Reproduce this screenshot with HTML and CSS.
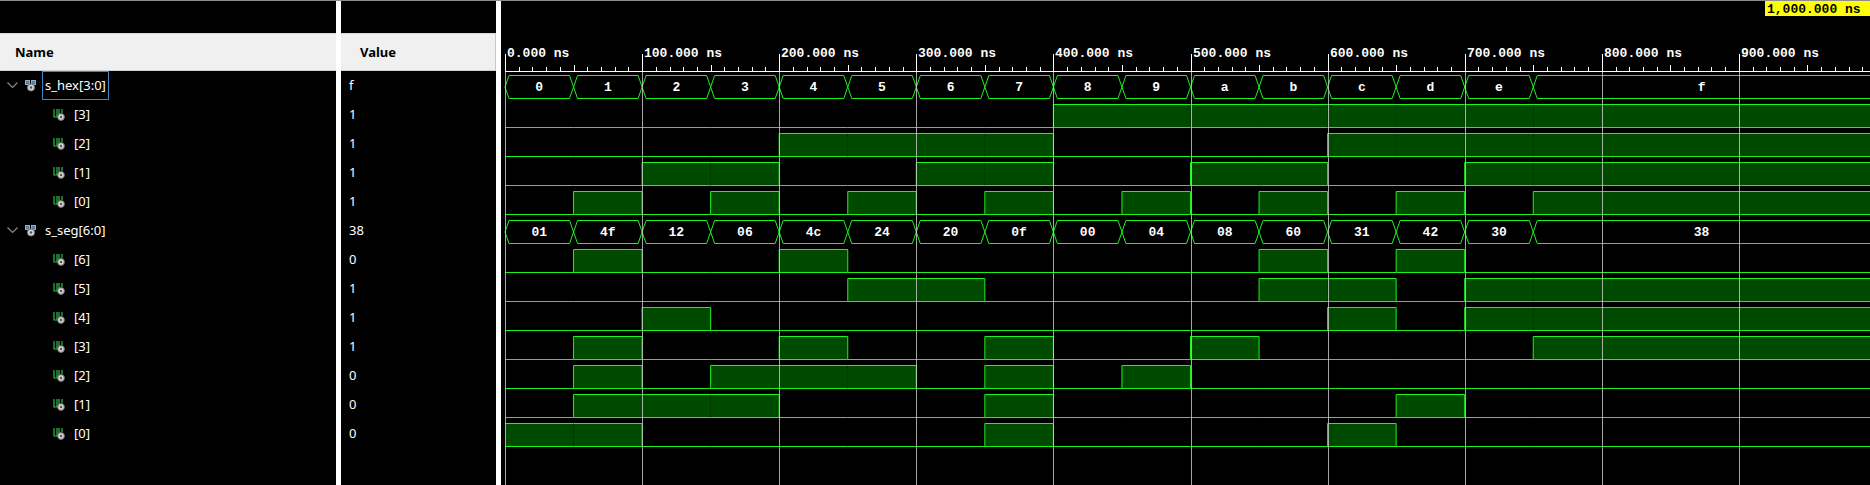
FILE: index.html
```html
<!DOCTYPE html>
<html lang="en">
<head>
  <meta charset="UTF-8">
  <title>Waveform</title>
  <link rel="stylesheet" href="styles.css">
</head>
<body>
  <div class="topline"></div>
  <div class="app">
    <div class="names">
      <div class="blank"></div>
      <div class="head">Name</div>
      <div id="nameRows"></div>
    </div>
    <div class="split"></div>
    <div class="values">
      <div class="blank"></div>
      <div class="head value-head">Value</div>
      <div id="valueRows"></div>
    </div>
    <div class="split"></div>
    <div class="wave">
      <svg id="wave" width="1369" height="484"></svg>
    </div>
  </div>

  <script>
    const hex = [0,1,2,3,4,5,6,7,8,9,10,11,12,13,14,15];
    const seg = [0x01,0x4f,0x12,0x06,0x4c,0x24,0x20,0x0f,0x00,0x04,0x08,0x60,0x31,0x42,0x30,0x38];

    const rows = [];
    rows.push({ type: "bus", name: "s_hex[3:0]", vals: hex, fmt: v => v.toString(16), sel: true });
    for (let b = 3; b >= 0; b--) rows.push({ type: "bit", name: `[${b}]`, vals: hex.map(v => (v >> b) & 1) });
    rows.push({ type: "bus", name: "s_seg[6:0]", vals: seg, fmt: v => v.toString(16).padStart(2, "0") });
    for (let b = 6; b >= 0; b--) rows.push({ type: "bit", name: `[${b}]`, vals: seg.map(v => (v >> b) & 1) });

    const chevron = '<svg class="chev" width="11" height="7" viewBox="0 0 11 7"><polyline points="0.5,0.5 5.5,5.5 10.5,0.5" fill="none" stroke="#8a8a8a" stroke-width="1.2"/></svg>';
    const busIcon = '<svg class="icon" width="13" height="13" viewBox="0 0 13 13"><path d="M0 1h5v5H0zM6 1h5v5H6z" fill="#8fb1cf"/><path d="M1 2h3v3H1zM7 2h3v3H7z" fill="#5d7f9e"/><circle cx="6" cy="8.5" r="3.6" fill="#d6d6d6" stroke="#6a6a6a"/><circle cx="6" cy="8.5" r="1.3" fill="#555"/></svg>';
    const bitIcon = '<svg class="icon" width="13" height="13" viewBox="0 0 13 13"><path d="M1 1v8h3V1M6 1v6M9 1v4" fill="none" stroke="#2fb84a" stroke-width="1.2"/><circle cx="8" cy="9" r="3.4" fill="#d6d6d6" stroke="#6a6a6a"/><circle cx="8" cy="9" r="1.2" fill="#555"/></svg>';

    let nameHtml = "", valueHtml = "";
    rows.forEach(r => {
      const last = r.vals[r.vals.length - 1];
      const shown = r.type === "bus" ? r.fmt(last) : String(last);
      if (r.type === "bus") {
        nameHtml += `<div class="row bus">${chevron}${busIcon}<span class="label${r.sel ? " sel" : ""}">${r.name}</span></div>`;
      } else {
        nameHtml += `<div class="row bit">${bitIcon}<span class="label">${r.name}</span></div>`;
      }
      valueHtml += `<div class="row"><span class="val${r.sel ? " sel" : ""}">${shown}</span></div>`;
    });
    document.getElementById("nameRows").innerHTML = nameHtml;
    document.getElementById("valueRows").innerHTML = valueHtml;

    // waveform
    const W = 1369;
    const X = t => 4 + t * 1.371;
    const rowTop = i => 70 + 29 * i;
    let s = "";

    // timeline ticks
    s += `<line class="axis" x1="${X(0)}" y1="70.5" x2="${W}" y2="70.5"/>`;
    for (let t = 0; t <= 1000; t += 10) {
      const x = Math.round(X(t)) + 0.5;
      if (t % 100 === 0) continue;
      const h = t % 50 === 0 ? 6 : 4;
      s += `<line class="axis" x1="${x}" y1="${70 - h}" x2="${x}" y2="70"/>`;
    }
    let grid = "";
    for (let t = 0; t <= 900; t += 100) {
      const x = Math.round(X(t)) + 0.5;
      s += `<line class="axis" x1="${x}" y1="53" x2="${x}" y2="70"/>`;
      grid += `<line class="grid" x1="${x}" y1="71" x2="${x}" y2="484"/>`;
      s += `<text class="ts" x="${x + 1.5}" y="56">${t}.000 ns</text>`;
    }

    rows.forEach((r, i) => {
      const y0 = rowTop(i);
      const hi = y0 + 4.5, lo = y0 + 27.5, mid = (hi + lo) / 2;
      const edges = r.vals.map((v, k) => X(k * 50));
      edges.push(W + 10);
      if (r.type === "bus") {
        let p = "";
        r.vals.forEach((v, k) => {
          const a = edges[k], b = edges[k + 1];
          if (k === 0) p += `M${a} ${mid}L${a + 4} ${hi}M${a} ${mid}L${a + 4} ${lo}`;
          p += `M${a + 4} ${hi}H${b - 4}M${a + 4} ${lo}H${b - 4}`;
          if (k < r.vals.length - 1) p += `M${b - 4} ${hi}L${b + 4} ${lo}M${b - 4} ${lo}L${b + 4} ${hi}`;
          const cx = (a + Math.min(b, W)) / 2;
          s += `<text class="bv" x="${cx}" y="${mid + 4}">${r.fmt(v)}</text>`;
        });
        s += `<path class="sig" d="${p}"/>`;
      } else {
        let p = `M${edges[0]} ${r.vals[0] ? hi : lo}`;
        r.vals.forEach((v, k) => {
          const a = edges[k], b = edges[k + 1];
          if (k > 0 && v !== r.vals[k - 1]) p += `V${v ? hi : lo}`;
          p += `H${b}`;
          if (v) {
            s += `<rect class="fill" x="${a}" y="${hi}" width="${b - a}" height="${lo - hi}"/>`;
            s += `<line class="sig" x1="${a}" y1="${lo}" x2="${b}" y2="${lo}"/>`;
          }
        });
        s += `<path class="sig" d="${p}"/>`;
      }
    });
    s += grid;

    // cursor label
    s += `<rect class="mark" x="1264" y="0" width="105" height="15"/>`;
    s += `<text class="ts mark-text" x="1266" y="12">1,000.000 ns</text>`;

    document.getElementById("wave").innerHTML = s;
  </script>
</body>
</html>
```

FILE: styles.css
```css
body {
  margin: 0;
  background-color: #000;
  color: #fff;
  font-family: "Noto Sans", "Open Sans", sans-serif;
  font-size: 13px;
  overflow: hidden;
}
.topline {
  height: 1px;
  background-color: #8c8c8c;
}
.app {
  display: flex;
  height: 484px;
}
.names {
  width: 336px;
}
.values {
  width: 155px;
}
.split {
  width: 5px;
  background-color: #fff;
}
.wave {
  flex: 1;
  line-height: 0;
}
.blank {
  height: 32px;
}
.head {
  height: 38px;
  box-sizing: border-box;
  display: flex;
  align-items: center;
  padding-left: 15px;
  background-color: #f0f0f0;
  border-top: 1px solid #d8d8d8;
  border-bottom: 1px solid #d0d0d0;
  color: #000;
  font-weight: bold;
  font-size: 13px;
}
.value-head {
  padding-left: 19px;
  border-right: 1px solid #c8c8c8;
}
.row {
  height: 29px;
  display: flex;
  align-items: center;
  white-space: nowrap;
}
.row.bus {
  padding-left: 7px;
}
.row.bus .chev {
  margin-right: 7px;
}
.row.bit {
  padding-left: 53px;
}
.icon {
  margin-right: 4px;
}
.row.bit .icon {
  margin-right: 5px;
}
.label {
  padding: 0 2px;
  line-height: 27px;
  border: 1px solid transparent;
}
.sel {
  border: 1px solid #3f86c4;
}
.val {
  margin-left: 4px;
  padding-left: 3px;
  width: 147px;
  box-sizing: border-box;
  line-height: 27px;
  border: 1px solid transparent;
}
#wave {
  display: block;
}
#wave .axis {
  stroke: #fff;
  stroke-width: 1;
}
#wave .grid {
  stroke: #cfcfcf;
  stroke-width: 1;
  opacity: 0.8;
}
#wave .sig {
  fill: none;
  stroke: #1cf21c;
  stroke-width: 1;
}
#wave .fill {
  fill: #004a00;
}
#wave text {
  font-family: "Liberation Mono", monospace;
  font-weight: bold;
  font-size: 13px;
  fill: #fff;
}
#wave .bv {
  text-anchor: middle;
}
#wave .mark {
  fill: #ffff00;
}
#wave .mark-text {
  fill: #000;
}
```
